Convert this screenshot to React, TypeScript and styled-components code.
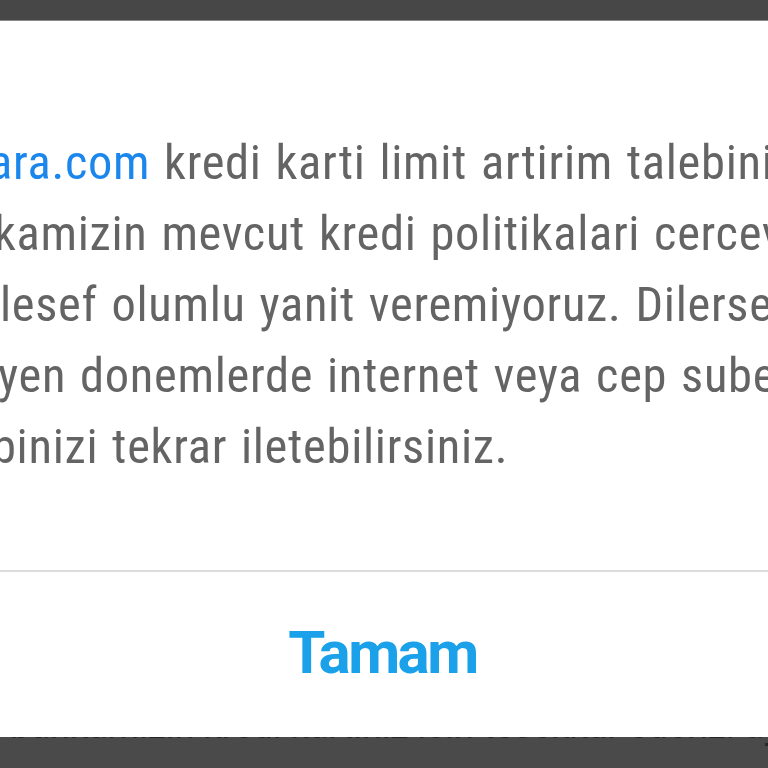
import React from "react";
import styled, { createGlobalStyle } from "styled-components";

const Global = createGlobalStyle`
  html, body { margin: 0; padding: 0; background: #4a4a4a; overflow: hidden; }
  #root { width: 768px; height: 768px; }
`;

const Page = styled.div`
  width: 768px;
  height: 768px;
  display: flex;
  flex-direction: column;
  background: #4a4a4a;
  overflow: hidden;
`;

const TopBar = styled.div`
  height: 20px;
  flex: none;
  background: #474747;
  border-bottom: 1px solid #8a8a8a;
`;

const Dialog = styled.div`
  flex: none;
  height: 716px;
  background: #ffffff;
  display: flex;
  flex-direction: column;
  overflow: hidden;
`;

const Body = styled.div`
  flex: none;
  height: 549px;
  padding-top: 106px;
  box-sizing: border-box;
  display: flex;
  flex-direction: column;
  font-family: "Roboto Condensed", Roboto, "Liberation Sans", sans-serif;
  font-size: 48.5px;
  line-height: 71px;
  letter-spacing: 0.7px;
  word-spacing: 2px;
  color: #646464;
`;

const Line = styled.div<{ $shift: number }>`
  white-space: nowrap;
  margin-left: ${(p) => p.$shift}px;
`;

const Link = styled.span`
  color: #1b86ec;
`;

const Divider = styled.div`
  flex: none;
  height: 2px;
  background: #dcdcdc;
`;

const Actions = styled.div`
  flex: 1;
  display: flex;
  align-items: center;
  justify-content: center;
  padding-bottom: 4px;
  padding-right: 3px;
`;

const Button = styled.button`
  border: none;
  background: transparent;
  font-family: Roboto, "Liberation Sans", sans-serif;
  font-weight: 700;
  font-size: 60px;
  letter-spacing: -2.5px;
  color: #1ba1ea;
  padding: 0;
  cursor: pointer;
`;

const BottomBar = styled.div`
  flex: 1;
  background: #4a4a4a;
  overflow: hidden;
`;

const BehindText = styled.div`
  margin-top: -31px;
  white-space: nowrap;
  font-family: Roboto, "Liberation Sans", sans-serif;
  font-size: 36px;
  line-height: 40px;
  color: #262626;
  padding-left: 10px;
`;

const lines: { shift: number; link?: string; text: string }[] = [
  { shift: -11, link: "ara.com", text: " kredi karti limit artirim talebiniz" },
  { shift: -6, text: "kamizin mevcut kredi politikalari cercevesinde" },
  { shift: 0, text: "lesef olumlu yanit veremiyoruz. Dilerseniz" },
  { shift: -2, text: "yen donemlerde internet veya cep subesi" },
  { shift: -8, text: "binizi tekrar iletebilirsiniz." },
];

export default function App() {
  return (
    <>
      <Global />
      <Page>
        <TopBar />
        <Dialog>
          <Body>
            {lines.map((l, i) => (
              <Line key={i} $shift={l.shift}>
                {l.link && <Link>{l.link}</Link>}
                {l.text}
              </Line>
            ))}
          </Body>
          <Divider />
          <Actions>
            <Button>Tamam</Button>
          </Actions>
        </Dialog>
        <BottomBar>
          <BehindText>bankamizin kredi kartiniz icin tesekkur ederiz. ayrica</BehindText>
        </BottomBar>
      </Page>
    </>
  );
}
